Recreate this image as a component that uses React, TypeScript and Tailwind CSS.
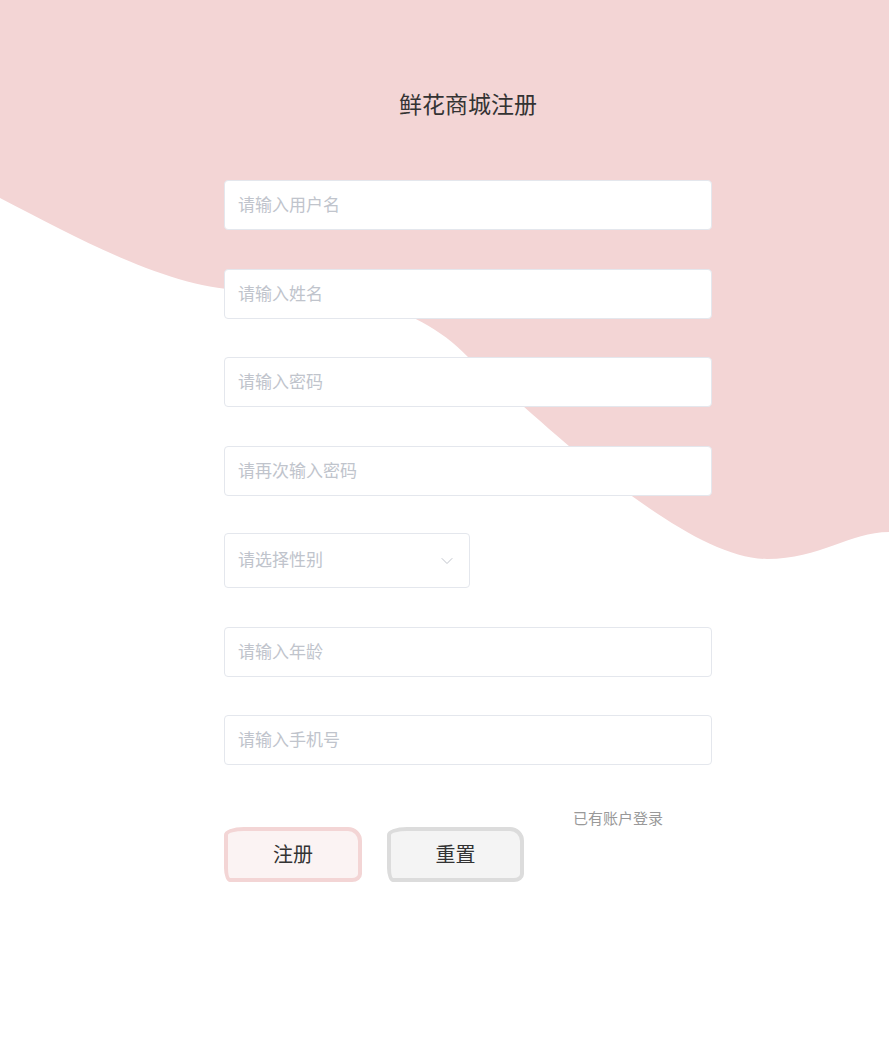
import { ChevronDown } from "lucide-react";

const fields = [
  { ph: "请输入用户名", mt: "mt-0" },
  { ph: "请输入姓名", mt: "mt-[39px]" },
  { ph: "请输入密码", mt: "mt-[38px]" },
  { ph: "请再次输入密码", mt: "mt-[39px]" },
];

const fields2 = [
  { ph: "请输入年龄", mt: "mt-[39px]" },
  { ph: "请输入手机号", mt: "mt-[38px]" },
];

function Field({ ph, mt }: { ph: string; mt: string }) {
  return (
    <input
      placeholder={ph}
      className={`${mt} block h-[50px] w-full rounded-[4px] border border-[#e4e7ed] bg-white px-[13px] pb-[3px] text-[17px] text-[#606266] outline-none placeholder:text-[#c0c4cc]`}
    />
  );
}

export default function App() {
  return (
    <div
      className="relative min-h-[1048px] w-full overflow-hidden bg-white"
      style={{ fontFamily: '"Microsoft YaHei", "Noto Sans CJK SC", "Liberation Sans", sans-serif' }}
    >
      {/* wave background */}
      <svg
        className="absolute left-0 top-0"
        width="889"
        height="562"
        viewBox="0 0 889 562"
      >
        <path
          d="M0,0 L889,0 L889,532 C850,532 820,559 767,559 C680,559 530,410 468,357 C410,296 320,290 240,290 C170,287 90,245 0,198 Z"
          fill="#f3d5d5"
        />
      </svg>

      <div className="relative ml-[224px] w-[488px] pt-[88px]">
        <h1 className="text-center text-[23px] leading-[30px] text-[#333]">鲜花商城注册</h1>

        <div className="mt-[62px]">
          {fields.map((f) => (
            <Field key={f.ph} {...f} />
          ))}

          <div className="mt-[37px] flex h-[55px] w-[246px] items-center justify-between rounded-[4px] border border-[#e4e7ed] bg-white pb-[3px] pl-[13px] pr-[12px]">
            <span className="text-[17px] text-[#c0c4cc]">请选择性别</span>
            <ChevronDown size={20} strokeWidth={1.2} className="mt-[3px] text-[#c0c4cc]" />
          </div>

          {fields2.map((f) => (
            <Field key={f.ph} {...f} />
          ))}
        </div>

        <div className="mt-[43px] flex justify-end pr-[49px]">
          <span className="text-[15px] leading-[20px] text-[#999]">已有账户登录</span>
        </div>

        <div className="mt-[-1px] flex gap-[25px]">
          <button className="flex h-[55px] w-[138px] items-center justify-center rounded-[20px_14px_10px_6px/8px_14px_8px_14px] border-[4px] border-[#f3d5d5] bg-[#fbf3f3] pb-[2px] text-[20px] text-[#333]">
            注册
          </button>
          <button className="flex h-[55px] w-[137px] items-center justify-center rounded-[20px_14px_10px_6px/8px_14px_8px_14px] border-[4px] border-[#dcdcdc] bg-[#f4f4f4] pb-[2px] text-[20px] text-[#333]">
            重置
          </button>
        </div>
      </div>
    </div>
  );
}
